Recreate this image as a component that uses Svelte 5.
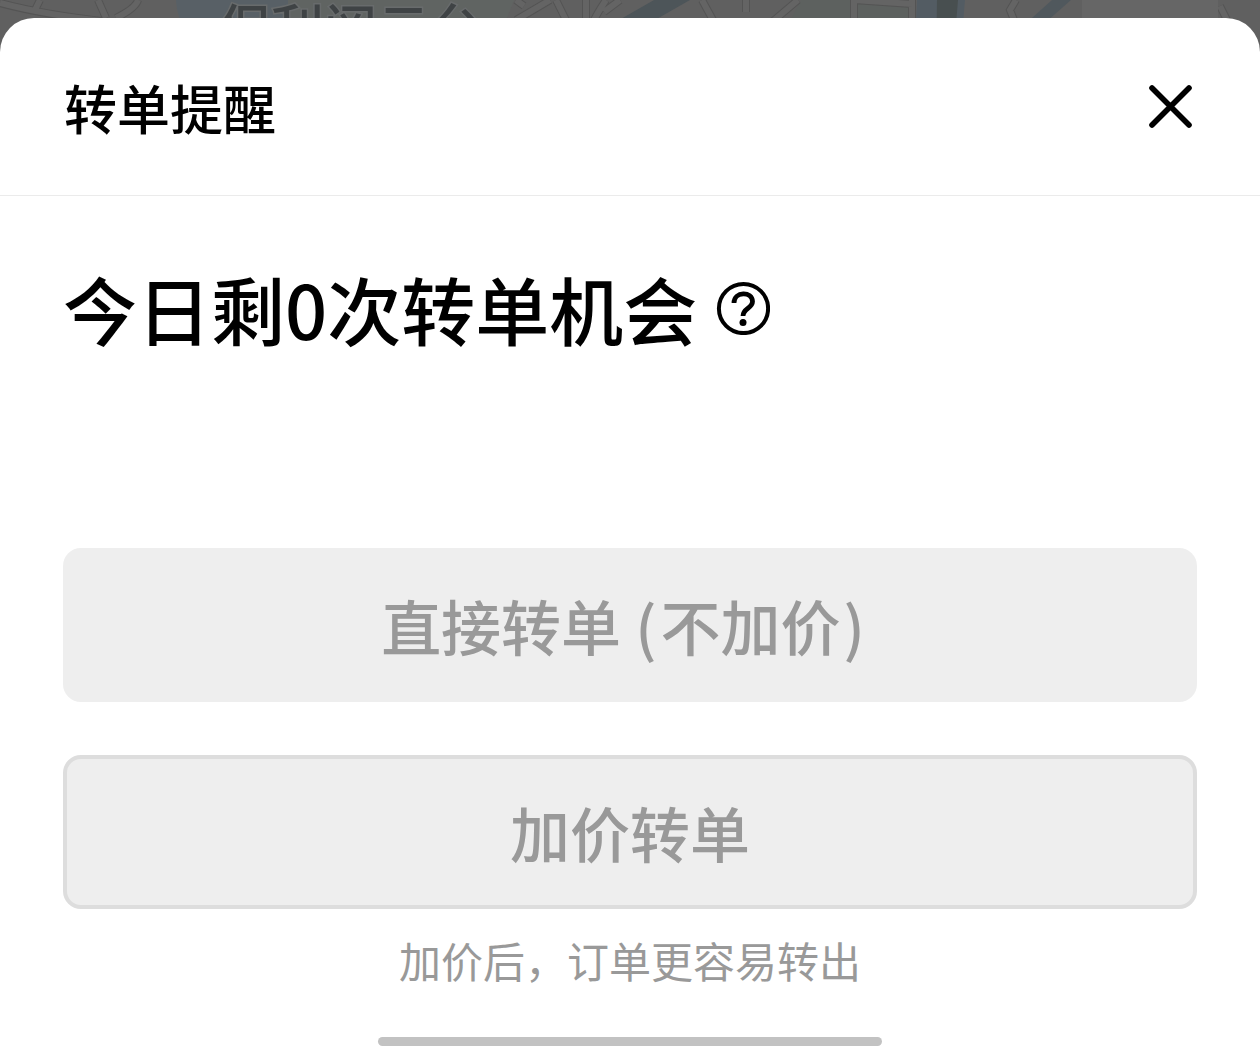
<script>
  let { remaining = 0 } = $props();

  let open = $state(true);
  let disabled = $derived(remaining === 0);

  const close = () => {
    open = false;
  };
</script>

<div class="screen">
	<div class="map">
		<svg viewBox="0 0 1260 60" preserveAspectRatio="xMidYMin slice" aria-hidden="true">
			<rect width="1260" height="60" fill="#606060" />
			<path d="M176 0H290V60H200Q176 20 176 0Z" fill="#586066" />
			<path d="M288 0H514L490 60H288Z" fill="#606462" />
			<path d="M654 0H690L620 40H584Z" fill="#4d5559" />
			<path d="M838 0H912V60H838ZM801 0H838V60H770Z" fill="#5d615f" />
			<path d="M917 0H965L960 60H914Z" fill="#535c63" />
			<path d="M937 0H958L953 60H936Z" fill="#484f50" />
			<path d="M1052 0H1071L1003 60H985Z" fill="#50585d" />
			<g fill="none" stroke="#545454" stroke-width="8">
				<path d="M0 3Q45 15 110 22M34 12L40 0M98 0L106 18M138 0Q136 8 116 18" />
				<path d="M516 0L524 6M550 0Q530 12 516 20M556 0L566 20M586 0V20M606 0Q598 12 594 20M620 0L604 12M702 0L714 22M746 -4V12M798 0L772 22M854 0V20M912 0V20M854 0L912 4M1016 0L1010 10L1014 20M1220 6L1228 22" />
			</g>
			<g fill="none" stroke="#646464" stroke-width="6">
				<path d="M0 3Q45 15 110 22M34 12L40 0M98 0L106 18M138 0Q136 8 116 18" />
				<path d="M516 0L524 6M550 0Q530 12 516 20M556 0L566 20M586 0V20M606 0Q598 12 594 20M620 0L604 12M702 0L714 22M746 -4V12M798 0L772 22M854 0V20M912 0V20M854 0L912 4M1016 0L1010 10L1014 20M1220 6L1228 22" />
			</g>
			<rect x="1082" width="136" height="60" fill="#666666" />
			<text x="218" y="49" class="place">保利阅云台</text>
		</svg>
	</div>

	{#if open}
		<section class="sheet" role="dialog" aria-labelledby="sheet-title">
			<header>
				<h1 id="sheet-title">转单提醒</h1>
				<button class="icon" type="button" aria-label="关闭" onclick={close}>
					<svg width="44" height="44" viewBox="0 0 44 44">
						<path d="M4 3L41 40M41 3L4 40" fill="none" stroke="#000" stroke-width="5.6" stroke-linecap="round" />
					</svg>
				</button>
			</header>

			<div class="content">
				<h2>
					<span>今日剩{remaining}次转单机会</span>
					<button class="icon" type="button" aria-label="说明">
						<svg width="54" height="54" viewBox="0 0 54 54">
							<circle cx="27.5" cy="27.5" r="24.6" fill="none" stroke="#000" stroke-width="4" />
							<path d="M18 22C18 10 36.5 10 36.5 20.5C36.5 27.5 27 27 27 35" fill="none" stroke="#000" stroke-width="4.8" />
							<circle cx="27" cy="41.5" r="3.5" />
						</svg>
					</button>
				</h2>

				<div class="actions">
					<button class="action" type="button" {disabled}>直接转单<span class="paren-open">(</span>不加价<span class="paren-close">)</span></button>
					<button class="action outlined" type="button" {disabled}>加价转单</button>
				</div>
				<p>加价后，订单更容易转出</p>
			</div>

			<div class="home-bar"></div>
		</section>
	{/if}
</div>

<style>
	:global(body) {
		margin: 0;
		background: #606060;
	}
	.screen {
		position: relative;
		padding-top: 18px;
		font-family: 'Noto Sans CJK SC', sans-serif;
		color: #000;
	}
	.map {
		position: absolute;
		top: 0;
		left: 0;
		right: 0;
		height: 60px;
		overflow: hidden;
	}
	.map svg {
		display: block;
		width: 100%;
		height: 100%;
	}
	.place {
		font-size: 53px;
		font-weight: 500;
		fill: #3f4345;
		stroke: #686b6c;
		stroke-width: 3px;
		paint-order: stroke;
	}
	.sheet {
		position: relative;
		display: flex;
		flex-direction: column;
		min-height: calc(100vh - 18px);
		box-sizing: border-box;
		padding-bottom: 4px;
		background: #fff;
		border-radius: 34px 34px 0 0;
	}
	header {
		display: flex;
		align-items: center;
		justify-content: space-between;
		padding: 49px 68px 48px 64px;
		border-bottom: 1px solid #ebebeb;
	}
	h1 {
		margin: 0;
		font-size: 53px;
		line-height: 80px;
		font-weight: 500;
	}
	.icon {
		display: flex;
		padding: 0;
		border: 0;
		background: none;
		cursor: pointer;
	}
	.content {
		padding: 58px 63px 0;
	}
	h2 {
		display: flex;
		align-items: center;
		gap: 19px;
		margin: 0;
		font-size: 74px;
		line-height: 108px;
		font-weight: 500;
	}
	.actions {
		display: flex;
		flex-direction: column;
		gap: 53px;
		margin-top: 186px;
	}
	.action {
		height: 154px;
		padding: 0;
		border: 0;
		border-radius: 18px;
		background: #eee;
		color: #999;
		font-family: inherit;
		font-size: 60px;
		line-height: 88px;
		font-weight: 500;
	}
	.outlined {
		border: 4px solid #ddd;
	}
	.paren-open {
		margin: 0 4px 0 14px;
	}
	.paren-close {
		margin: 0 14px 0 3px;
	}
	p {
		margin: 20px 0 0;
		font-size: 42px;
		line-height: 62px;
		color: #999;
		text-align: center;
	}
	.home-bar {
		width: 40%;
		height: 9px;
		margin: auto auto 0;
		border-radius: 5px;
		background: #c2c2c2;
	}
</style>
